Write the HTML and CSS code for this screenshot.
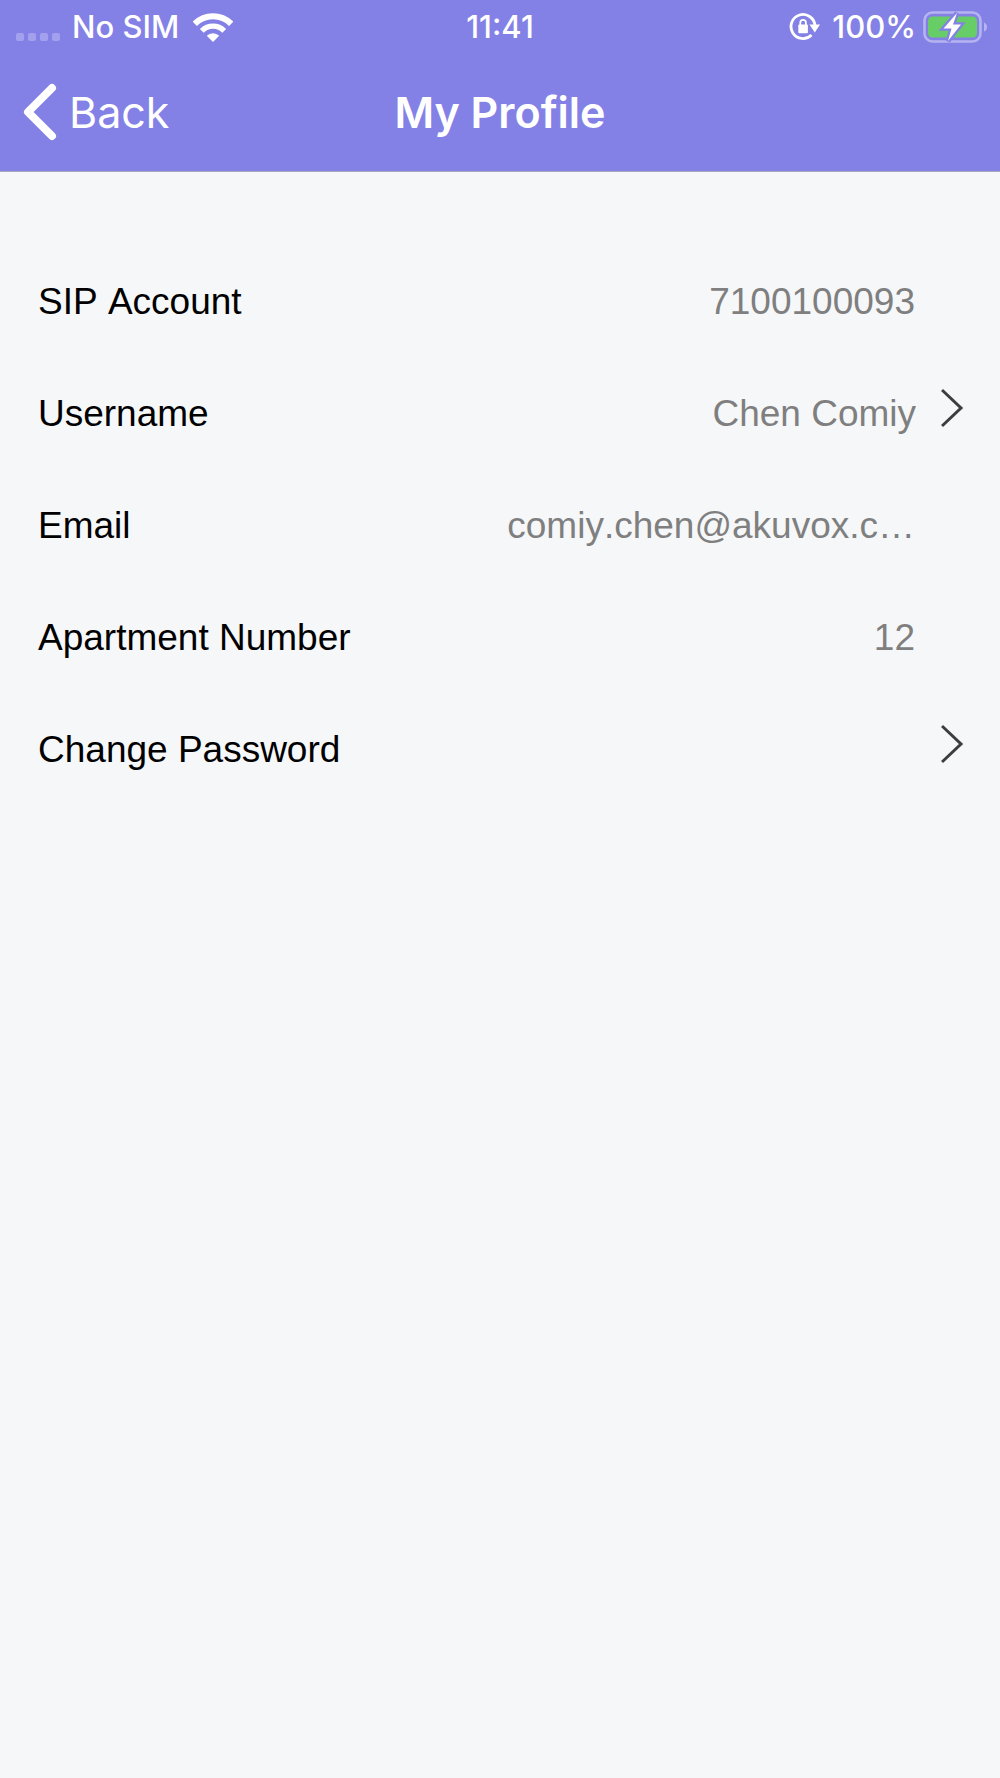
FILE: index.html
```html
<!DOCTYPE html>
<html lang="en">
<head>
    <meta charset="UTF-8">
    <meta name="viewport" content="width=device-width, initial-scale=1.0">
    <title>My Profile</title>
    <link rel="stylesheet" href="styles.css">
</head>
<body>
    <header class="header">
        <div class="status-bar">
            <div class="status-left">
                <div class="signal"><i></i><i></i><i></i><i></i></div>
                <span>No SIM</span>
                <svg class="wifi" width="40" height="32" viewBox="0 0 40 32" fill="none" stroke="#fff" stroke-width="6" aria-hidden="true">
                    <path d="M1.8 12.8a25.7 25.7 0 0 1 36.4 0"/>
                    <path d="M8.8 19.8a15.8 15.8 0 0 1 22.4 0" stroke-width="5.4"/>
                    <path d="M20 31l-6.2-6.2a8.8 8.8 0 0 1 12.4 0z" fill="#fff" stroke="none"/>
                </svg>
            </div>
            <span>11:41</span>
            <div class="status-right">
                <svg width="31" height="30" viewBox="0 0 31 30" fill="none" aria-hidden="true">
                    <path d="M26 14A12 12 0 1 0 22.5 23" stroke="#fff" stroke-width="2.8"/>
                    <path d="M20.5 12.5H31l-5.2 8z" fill="#fff"/>
                    <rect x="9.3" y="12.6" width="9.6" height="8.6" rx="1" fill="#fff"/>
                    <path d="M11.3 13v-2.4a2.8 2.8 0 0 1 5.6 0V13" stroke="#fff" stroke-width="1.8"/>
                </svg>
                <span>100%</span>
                <svg class="battery" width="65" height="34" viewBox="0 0 65 34" aria-hidden="true">
                    <rect x="1.5" y="2.5" width="56" height="29" rx="8" fill="none" stroke="#b5b3f0" stroke-width="2.6"/>
                    <path d="M61 12.5q3 1 3 4.5t-3 4.5z" fill="#b5b3f0"/>
                    <rect x="5" y="6.5" width="49" height="21" rx="4.5" fill="#67ce67"/>
                    <path d="M34 3L20.5 18.5h8L25 31 38 14.5h-8z" fill="#fff" stroke="#8481e6" stroke-width="4.5" paint-order="stroke"/>
                </svg>
            </div>
        </div>
        <nav class="nav-bar">
            <a class="back" href="#">
                <svg width="35" height="58" viewBox="0 0 35 58" fill="none" stroke="#fff" stroke-width="8" stroke-linecap="round" stroke-linejoin="round" aria-hidden="true">
                    <path d="M30 5L6 29l24 24"/>
                </svg>
                <span>Back</span>
            </a>
            <h1>My Profile</h1>
        </nav>
    </header>

    <main class="profile">
        <div class="row">
            <span class="label">SIP Account</span>
            <span class="value">7100100093</span>
        </div>
        <a class="row" href="#">
            <span class="label">Username</span>
            <span class="value">Chen Comiy</span>
            <svg class="chevron" width="24" height="40" viewBox="0 0 24 40" aria-hidden="true">
                <path d="M1 2l19 18L1 38"/>
            </svg>
        </a>
        <div class="row">
            <span class="label">Email</span>
            <span class="value">comiy.chen@akuvox.c…</span>
        </div>
        <div class="row">
            <span class="label">Apartment Number</span>
            <span class="value">12</span>
        </div>
        <a class="row" href="#">
            <span class="label">Change Password</span>
            <span class="value"></span>
            <svg class="chevron" width="24" height="40" viewBox="0 0 24 40" aria-hidden="true">
                <path d="M1 2l19 18L1 38"/>
            </svg>
        </a>
    </main>
</body>
</html>
```
FILE: styles.css
```css
body {
    margin: 0;
    font-family: "Liberation Sans", Arial, sans-serif;
    background-color: #f6f7f9;
}
a {
    color: inherit;
    text-decoration: none;
}
svg {
    display: block;
    flex-shrink: 0;
}

/* Header */
.header {
    background-color: #8481e6;
    color: #fff;
    font-family: Inter, sans-serif;
    border-bottom: 1px solid #a9a8bd;
}
.status-bar, .nav-bar {
    display: grid;
    grid-template-columns: 1fr auto 1fr;
    align-items: center;
}
.status-bar {
    height: 53px;
    padding: 0 12px;
    font-size: 31px;
    font-weight: 500;
}
.status-left, .status-right {
    display: flex;
    align-items: center;
    gap: 12px;
}
.status-right {
    justify-content: flex-end;
}
.signal {
    display: flex;
    gap: 4px;
    margin: 20px 0 0 4px;
}
.signal i {
    width: 8px;
    height: 8px;
    border-radius: 2px;
    background-color: #a3a1ed;
}
.wifi {
    margin-left: 2px;
}
.battery {
    margin-left: -5px;
}
.nav-bar {
    height: 118px;
    padding: 0 22px;
    font-size: 43px;
}
.nav-bar h1 {
    margin: 0;
    font-size: 43px;
    font-weight: 600;
}
.back {
    display: flex;
    align-items: center;
    gap: 12px;
}

/* Profile rows */
.profile {
    padding: 74px 36px 0 38px;
}
.row {
    display: flex;
    align-items: center;
    height: 112px;
    font-size: 37px;
    font-kerning: none;
}
.label {
    flex: 1;
    color: #000;
}
.value {
    margin-right: 49px;
    overflow: hidden;
    text-overflow: ellipsis;
    white-space: nowrap;
    color: #7f7f7f;
}
.chevron {
    margin: 0 -1px 12px -24px;
    fill: none;
    stroke: #3d3d3d;
    stroke-width: 3;
}
```
